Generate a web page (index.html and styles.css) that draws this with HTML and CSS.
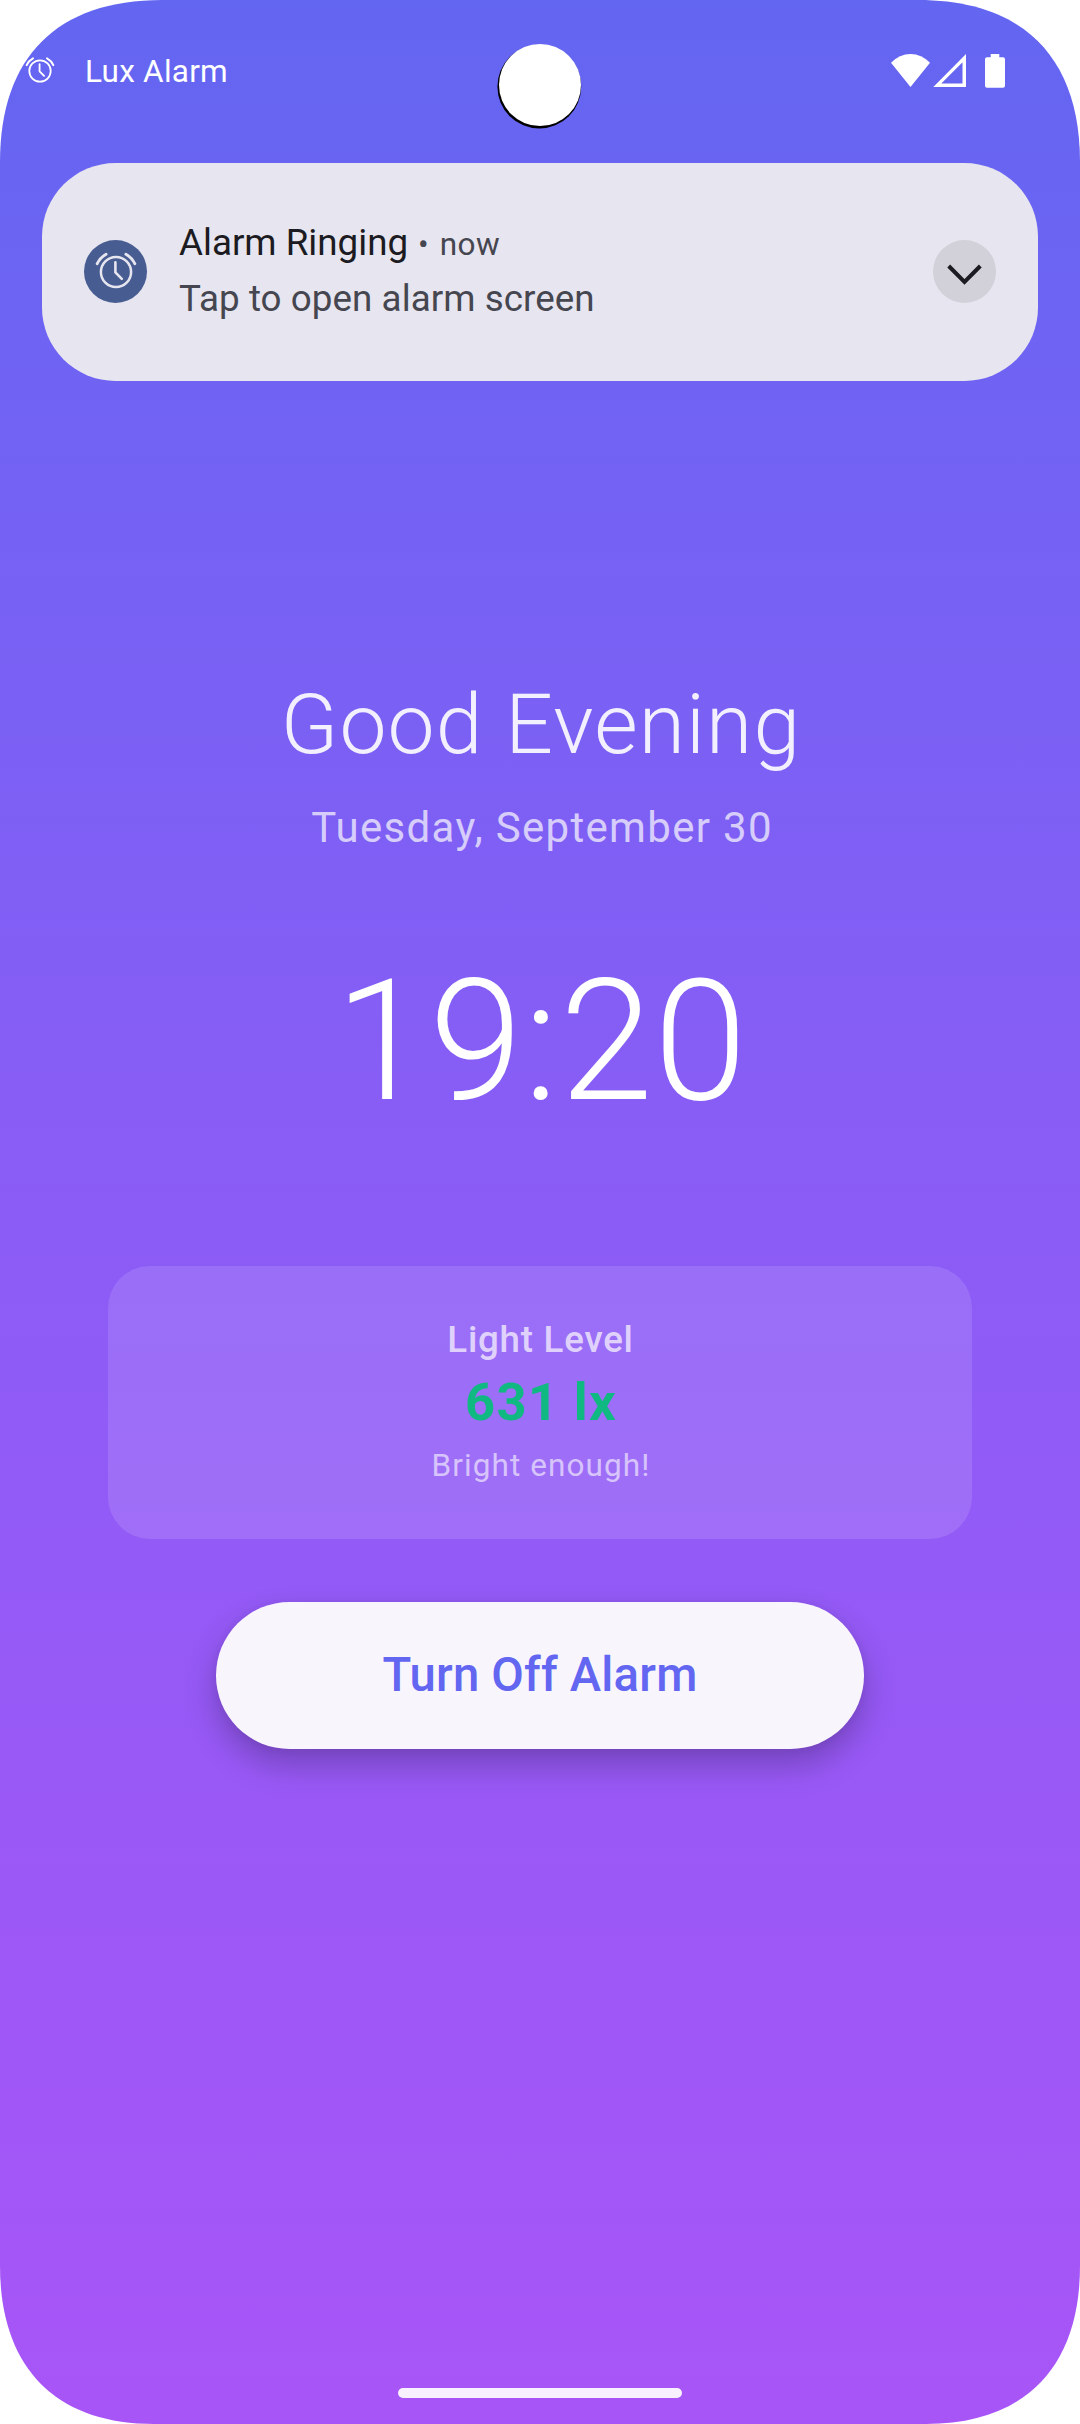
FILE: index.html
```html
<!DOCTYPE html>
<html lang="en">
<head>
<meta charset="utf-8">
<title>Lux Alarm</title>
<link rel="stylesheet" href="styles.css">
</head>
<body>
<svg class="defs" width="0" height="0" aria-hidden="true">
  <defs>
    <symbol id="alarm" viewBox="-24 -24 48 48">
      <g fill="none" stroke="currentColor" stroke-linecap="round" stroke-linejoin="round">
        <circle r="15.1" stroke-width="2.5"/>
        <path d="M-.6-9.8V.4L5.8 6.8" stroke-width="2.6"/>
        <path d="M-18.800-8.300A20.600 20.600 0 0 1-9.900-17.800M18.800-8.300A20.600 20.600 0 0 0 9.900-17.800" stroke-width="2.9"/>
      </g>
    </symbol>
    <clipPath id="screen-shape">
      <path d="M0 162C0 57 57 0 162 0H918C1023 0 1080 57 1080 162V2266C1080 2367 1025 2424 926 2424H154C55 2424 0 2367 0 2266Z"/>
    </clipPath>
  </defs>
</svg>
<main class="screen">
  <header class="status-bar">
    <svg class="status-alarm" width="34" height="34"><use href="#alarm"/></svg>
    <span class="status-app">Lux Alarm</span>
    <svg class="status-icons" width="116" height="36" viewBox="890 53 116 36" fill="#fff">
      <path d="M910.500 87L891 62.800Q899.500 54 910.500 54T930 62.800Z"/>
      <path fill-rule="evenodd" d="M933.300 87L966 54V87ZM941.300 83.400H962.500V62.300Z"/>
      <path d="M990.700 54H999.300V57.300H1003Q1005 57.300 1005 59.300V85.700Q1005 87.700 1003 87.700H987Q985 87.700 985 85.700V59.300Q985 57.300 987 57.300H990.700Z"/>
    </svg>
    <div class="camera"></div>
  </header>

  <section class="notification">
    <div class="app-icon"><svg width="48" height="48"><use href="#alarm"/></svg></div>
    <div class="notification-text">
      <div class="notification-head">
        <span class="notification-title">Alarm Ringing</span>
        <span class="meta">•</span>
        <span class="meta when">now</span>
      </div>
      <div class="notification-body">Tap to open alarm screen</div>
    </div>
    <div class="expand">
      <svg width="63" height="63" viewBox="0 0 63 63"><path d="M15.700 26L31.500 41.800L47.300 26" fill="none" stroke="#1b1b21" stroke-width="4"/></svg>
    </div>
  </section>

  <h1 class="greeting">Good Evening</h1>
  <p class="date">Tuesday, September 30</p>
  <p class="time">19:20</p>

  <section class="light-card">
    <p class="light-label">Light Level</p>
    <p class="light-value">631 lx</p>
    <p class="light-hint">Bright enough!</p>
  </section>

  <button class="turn-off" type="button">Turn Off Alarm</button>

  <div class="nav-handle"></div>
</main>
</body>
</html>
```
FILE: styles.css
```css
* { box-sizing: border-box; }

body {
  margin: 0;
  background: #fff;
  font-family: Roboto, "Noto Sans", sans-serif;
}

h1, p { margin: 0; }

.defs { position: absolute; }

.screen {
  display: flex;
  flex-direction: column;
  align-items: center;
  width: 1080px;
  height: 2424px;
  background: linear-gradient(#6366f1, #8b5cf6 50%, #a855f7);
  clip-path: url(#screen-shape);
  color: #fff;
}

/* Status bar */
.status-bar {
  position: relative;
  display: flex;
  align-items: flex-start;
  width: 100%;
  height: 163px;
  padding: 53px 74px 0 23px;
}

.status-alarm { margin-top: 1.3px; }

.status-app {
  margin-left: 28px;
  font-size: 31.5px;
  line-height: 38px;
  letter-spacing: .25px;
}

.status-icons { margin-left: auto; }

.camera {
  position: absolute;
  left: 499px;
  top: 44px;
  width: 82px;
  height: 82px;
  border-radius: 50%;
  background: #fff;
  box-shadow: -.7px 1.6px 0 .9px #000;
}

/* Notification */
.notification {
  display: flex;
  align-items: center;
  width: 996px;
  height: 218px;
  padding: 0 42px 1px;
  border-radius: 73.5px;
  background: #e7e5ef;
  color: #45464f;
}

.app-icon {
  display: flex;
  align-items: center;
  justify-content: center;
  width: 63px;
  height: 63px;
  border-radius: 50%;
  background: #475d92;
  color: #e7e5ef;
}

.notification-text {
  display: flex;
  flex: 1;
  flex-direction: column;
  gap: 13px;
  padding: 0 0 2px 32px;
}

.notification-head {
  display: flex;
  align-items: baseline;
  gap: 10px;
  height: 43px;
}

.notification-title,
.notification-body {
  font-size: 36.75px;
  line-height: 43px;
}

.notification-title { color: #1b1b21; }

.notification-body { letter-spacing: .06px; }

.meta {
  font-size: 31.5px;
  line-height: 37px;
}

.when {
  padding-left: 1px;
  letter-spacing: .5px;
}

.expand {
  width: 63px;
  height: 63px;
  border-radius: 50%;
  background: #d2d0d9;
}

/* Greeting and clock */
.greeting {
  margin-top: 295px;
  padding-left: 2px;
  color: rgba(255, 255, 255, .9);
  font-size: 84px;
  font-weight: 300;
  line-height: 98px;
  letter-spacing: 1.15px;
}

.date {
  margin-top: 29px;
  padding-left: 4px;
  color: rgba(255, 255, 255, .7);
  font-size: 42px;
  line-height: 49px;
  letter-spacing: 1.31px;
}

.time {
  margin-top: 91px;
  padding-left: 3px;
  font-size: 168px;
  font-weight: 300;
  line-height: 197px;
  letter-spacing: 1px;
}

/* Light level */
.light-card {
  display: flex;
  flex-direction: column;
  align-items: center;
  width: 864px;
  height: 273px;
  margin-top: 126px;
  padding-top: 52px;
  border-radius: 42px;
  background: rgba(255, 255, 255, .12);
}

.light-label {
  padding-left: 1px;
  color: rgba(255, 255, 255, .7);
  font-size: 36.75px;
  font-weight: 500;
  line-height: 43px;
  letter-spacing: .75px;
}

.light-value {
  margin-top: 10px;
  padding-left: 2px;
  color: #10b981;
  font-size: 52.5px;
  font-weight: 700;
  line-height: 62px;
  letter-spacing: 1.31px;
}

.light-hint {
  margin-top: 14px;
  padding-left: 2px;
  color: rgba(255, 255, 255, .6);
  font-size: 31.5px;
  line-height: 37px;
  letter-spacing: 1.1px;
}

.turn-off {
  width: 648px;
  height: 147px;
  margin-top: 63px;
  padding: 0;
  border: 0;
  border-radius: 73.5px;
  background: #f8f5fd;
  box-shadow: 0 16px 32px rgba(0, 0, 0, .24), 0 1px 8px rgba(0, 0, 0, .05);
  color: #6366f1;
  font: 500 47.25px/55px Roboto, "Noto Sans", sans-serif;
  letter-spacing: .2px;
}

.nav-handle {
  width: 284px;
  height: 10px;
  margin: auto 0 26px;
  border-radius: 5px;
  background: rgba(255, 255, 255, .92);
}
```
